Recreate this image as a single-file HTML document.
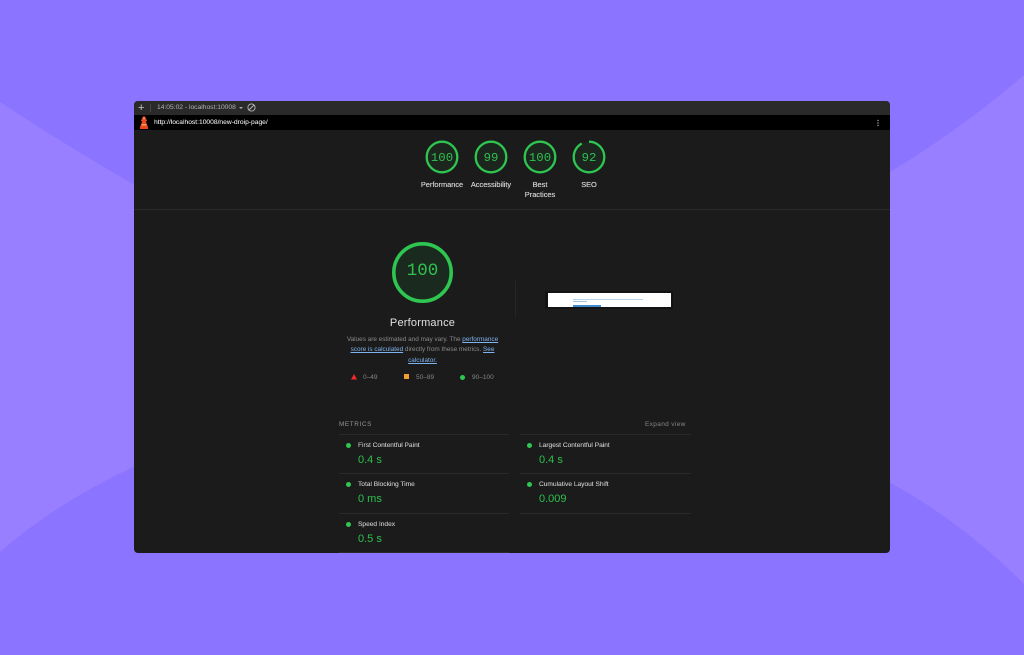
<!DOCTYPE html>
<html><head><meta charset="utf-8"><style>
*{box-sizing:border-box;margin:0;padding:0}
html,body{width:1024px;height:655px;overflow:hidden;background:#8b74ff;font-family:"Liberation Sans",sans-serif}
.a{position:absolute;white-space:nowrap}
#bg{position:absolute;left:0;top:0}
#w{position:absolute;left:134px;top:101px;width:756px;height:452px;background:#1b1b1b;border-radius:4px;overflow:hidden}
.c{text-align:center;transform:translateX(-50%)}
.m{font-family:"Liberation Mono",monospace;color:#2fc14f}
.l{color:#d0d0d0;font-size:7.400px;line-height:10px;text-shadow:0 0 .4px #d0d0d0}
.t{color:#c0c0c0;font-size:6.600px;text-shadow:0 0 .3px #c0c0c0}
.v{color:#2cc04d;font-size:11px}
.d{width:5px;height:5px;border-radius:50%;background:#2fc750;position:absolute}
.h{height:1px;background:#2a2a2a;position:absolute}
a{color:#7fb4ee;text-decoration:underline}
</style></head><body>
<svg id="bg" width="1024" height="655" viewBox="0 0 1024 655">
<path d="M0 102Q70 148 140 188L140 464Q60 500 0 552Z" fill="#977fff"/>
<path d="M1024 75Q960 130 885 175L885 480Q960 520 1024 584Z" fill="#977fff"/>
</svg>
<div id="w">
<div class="a" style="left:0;top:0;width:756px;height:14px;background:#2a2a2b"></div>
<div class="a" style="left:0;top:14px;width:756px;height:15px;background:#000"></div>
<div class="a" style="left:4px;top:1px;color:#c8c8c8;font-size:11px;line-height:12px">+</div>
<div class="a" style="left:16px;top:3px;width:1px;height:8px;background:#444"></div>
<div class="a" style="left:23px;top:3px;color:#b4b4b4;font-size:6.700px;line-height:8px">14:05:02 - localhost:10008</div>
<div class="a" style="left:105px;top:6px;width:0;height:0;border:2px solid transparent;border-top:2px solid #aaa"></div>
<svg class="a" style="left:113px;top:2px" width="9" height="9" viewBox="0 0 9 9"><circle cx="4.500" cy="4.500" r="3.600" fill="none" stroke="#bbb" stroke-width=".9"/><path d="M2 7 7 2" stroke="#bbb" stroke-width=".9"/></svg>
<svg class="a" style="left:5px;top:15px" width="10" height="13" viewBox="0 0 10 13"><path d="M3.500 1 5 0l1.500 1 .3 2.500H8v1.500H7l.7 3L9 11v2H1v-2l1.300-3L3 5H2V3.500h1.200z" fill="#e8481f"/><path d="M3.800 1.800h2.400l.2 1.500H3.600zM2.800 8h4.400l.5 1.500H2.300z" fill="#ff9a5c"/></svg>
<div class="a" style="left:20px;top:17px;color:#d8d8d8;font-size:6.700px;line-height:9px;text-shadow:0 0 .3px #d8d8d8">http://localhost:10008/new-droip-page/</div>
<svg class="a" style="left:742px;top:18px" width="4" height="9"><circle cx="2" cy="1.500" r=".7" fill="#aaa"/><circle cx="2" cy="4" r=".7" fill="#aaa"/><circle cx="2" cy="6.500" r=".7" fill="#aaa"/></svg>

<svg class="a" style="left:0;top:0" width="756" height="452">
<g fill="none" stroke="#2ec650" stroke-width="2.300">
<circle cx="308" cy="56" r="15.300" fill="#1c261e"/>
<circle cx="357" cy="56" r="15.300" fill="#1c261e"/>
<circle cx="406" cy="56" r="15.300" fill="#1c261e"/>
<circle cx="455" cy="56" r="15.300" fill="#1c261e" stroke-dasharray="88.500 96.100" transform="rotate(-90 455 56)"/>
<circle cx="288.500" cy="171.500" r="28.700" fill="#1b2a1f" stroke-width="3.600"/>
</g></svg>
<div class="a m c" style="left:308px;top:49.500px;font-size:12.300px;line-height:14px">100</div>
<div class="a m c" style="left:357px;top:49.500px;font-size:12.300px;line-height:14px">99</div>
<div class="a m c" style="left:406px;top:49.500px;font-size:12.300px;line-height:14px">100</div>
<div class="a m c" style="left:455px;top:49.500px;font-size:12.300px;line-height:14px">92</div>
<div class="a l c" style="left:308px;top:79px">Performance</div>
<div class="a l c" style="left:357px;top:79px">Accessibility</div>
<div class="a l c" style="left:406px;top:79px">Best<br>Practices</div>
<div class="a l c" style="left:455px;top:79px">SEO</div>
<div class="h" style="left:0;top:108px;width:756px"></div>

<div class="a m c" style="left:288.500px;top:158px;font-size:17.500px;line-height:24px">100</div>
<div class="a c" style="left:288.500px;top:215px;color:#e0e0e0;font-size:11px;line-height:14px;letter-spacing:.2px">Performance</div>
<div class="a c" style="left:288.500px;top:234px;color:#8a8a8a;font-size:6.400px;line-height:10.300px">Values are estimated and may vary. The <a>performance</a><br><a>score is calculated</a> directly from these metrics. <a>See</a><br><a>calculator.</a></div>
<svg class="a" style="left:216px;top:272px" width="8" height="8"><path d="M4 1 7 6.500H1z" fill="#f02b2b"/></svg>
<div class="a" style="left:229px;top:273px;color:#858585;font-size:6.500px;line-height:8px">0–49</div>
<div class="a" style="left:270px;top:273px;width:5px;height:5px;background:#f0a030"></div>
<div class="a" style="left:282px;top:273px;color:#858585;font-size:6.500px;line-height:8px">50–89</div>
<div class="d" style="left:326px;top:274px"></div>
<div class="a" style="left:338px;top:273px;color:#858585;font-size:6.500px;line-height:8px">90–100</div>

<div class="a" style="left:381px;top:180px;width:1px;height:36px;background:#262626"></div>
<div class="a" style="left:411px;top:190px;width:128px;height:18px;background:#131313"></div>
<div class="a" style="left:414px;top:192px;width:123px;height:14px;background:#fff"></div>
<div class="a" style="left:439px;top:198px;width:70px;height:1px;background:#b4d2ea"></div>
<div class="a" style="left:439px;top:200px;width:14px;height:1px;background:#9cc2e2"></div>
<div class="a" style="left:439px;top:204px;width:28px;height:2px;background:#3d8ad0"></div>

<div class="a" style="left:205px;top:320px;color:#949494;font-size:6.400px;line-height:8px;letter-spacing:.6px">METRICS</div>
<div class="a" style="left:511px;top:320px;color:#858585;font-size:6.500px;line-height:8px;letter-spacing:.35px">Expand view</div>
<div class="h" style="left:205px;top:333px;width:170px"></div>
<div class="h" style="left:386px;top:333px;width:171px"></div>
<div class="h" style="left:205px;top:372px;width:170px"></div>
<div class="h" style="left:386px;top:372px;width:171px"></div>
<div class="h" style="left:205px;top:412px;width:170px"></div>
<div class="h" style="left:386px;top:412px;width:171px"></div>
<div class="h" style="left:205px;top:451px;width:170px"></div>

<div class="d" style="left:212px;top:342px"></div>
<div class="a t" style="left:224px;top:341px;line-height:8px">First Contentful Paint</div>
<div class="a v" style="left:224px;top:352px;line-height:14px">0.4 s</div>
<div class="d" style="left:212px;top:381px"></div>
<div class="a t" style="left:224px;top:380px;line-height:8px">Total Blocking Time</div>
<div class="a v" style="left:224px;top:391px;line-height:14px">0 ms</div>
<div class="d" style="left:212px;top:421px"></div>
<div class="a t" style="left:224px;top:420px;line-height:8px">Speed Index</div>
<div class="a v" style="left:224px;top:431px;line-height:14px">0.5 s</div>
<div class="d" style="left:393px;top:342px"></div>
<div class="a t" style="left:405px;top:341px;line-height:8px">Largest Contentful Paint</div>
<div class="a v" style="left:405px;top:352px;line-height:14px">0.4 s</div>
<div class="d" style="left:393px;top:381px"></div>
<div class="a t" style="left:405px;top:380px;line-height:8px">Cumulative Layout Shift</div>
<div class="a v" style="left:405px;top:391px;line-height:14px">0.009</div>
</div>
</body></html>
